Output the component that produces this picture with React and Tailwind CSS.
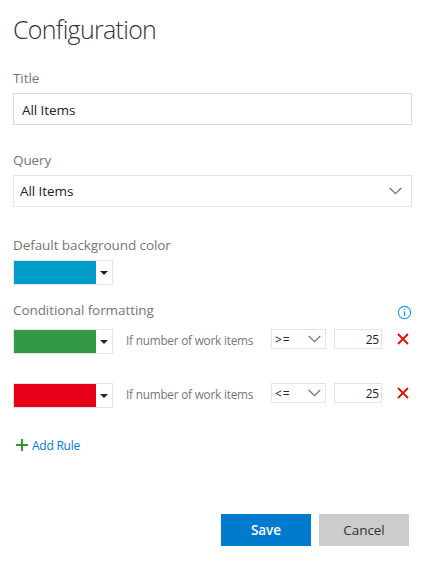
import React from "react";

function Chevron({ className }) {
  return (
    <svg className={className} width="13" height="8" viewBox="0 0 13 8" fill="none" stroke="#767676" strokeWidth="1.3">
      <path d="M0.7 1 L6.5 6.6 L12.3 1" />
    </svg>
  );
}

function ColorPicker({ color }) {
  return (
    <div className="flex h-[25px] w-[100px] shrink-0 border border-[#e3e3e3]">
      <div className={`w-[82px] ${color}`} />
      <div className="flex flex-1 items-center justify-center">
        <svg width="8" height="4" viewBox="0 0 8 4" fill="#222">
          <path d="M0 0 H8 L4 4 Z" />
        </svg>
      </div>
    </div>
  );
}

function Rule({ color, operator, value }) {
  return (
    <div className="flex h-[25px] items-start">
      <ColorPicker color={color} />
      <span className="ml-[13px] w-[145px] whitespace-nowrap text-[11.75px] leading-[23px] tracking-[-0.2px] text-[#767676]">
        If number of work items
      </span>
      <div className="flex h-5 w-[55px] items-center justify-between border border-[#e3e3e3] pr-1 pl-[3px] text-[12px] tracking-[1px] text-[#222]">
        <span className="pt-[2px]">{operator}</span>
        <Chevron />
      </div>
      <div className="ml-2 h-5 w-12 border border-[#e3e3e3] pr-[2px] text-right text-[12px] leading-5 tracking-[-0.2px] text-[#222]">
        {value}
      </div>
      <svg className="mt-1 ml-[15px]" width="12" height="12" viewBox="0 0 12 12" fill="none" stroke="#dd1408" strokeWidth="1.9">
        <path d="M1 1 L11 11 M11 1 L1 11" />
      </svg>
    </div>
  );
}

export default function App() {
  return (
    <div className="h-[567px] w-[436px] bg-white pr-6 pl-[13px] pt-[11px] font-['Open_Sans','Noto_Sans',sans-serif] text-[13.5px] tracking-[-0.08px] text-[#222]">
      <h1 className="h-9 text-[25px] leading-9 font-light tracking-[-0.7px] text-[#333]">Configuration</h1>
      <div className="mt-[21px] h-[25px] leading-5 text-[#767676]">Title</div>
      <div className="h-8 w-[399px] border border-[#dadada] pl-2 leading-[32px]">All Items</div>
      <div className="mt-[25px] h-[25px] leading-5 text-[#767676]">Query</div>
      <div className="flex h-8 w-[399px] items-center justify-between border border-[#e3e3e3] pr-[9px] pl-[6px]">
        <span>All Items</span>
        <Chevron />
      </div>
      <div className="mt-7 h-[25px] leading-5 text-[#767676]">Default background color</div>
      <ColorPicker color="bg-[#009ccc]" />
      <div className="mt-[15px] flex h-[29px] w-[399px] justify-between leading-5 text-[#767676]">
        <span>Conditional formatting</span>
        <svg className="mt-[5px]" width="15" height="15" viewBox="0 0 15 15" fill="none" stroke="#1a9ce0">
          <circle cx="7.5" cy="7.5" r="6.1" strokeWidth="1.1" />
          <path d="M7.5 6.2 V11 M7.5 3.8 V5" strokeWidth="1.2" />
        </svg>
      </div>
      <Rule color="bg-[#339947]" operator=">=" value="25" />
      <div className="h-[29px]" />
      <Rule color="bg-[#e60017]" operator="<=" value="25" />
      <div className="mt-[27px] ml-[3px] flex h-5 items-center gap-1 text-[12px] tracking-[-0.25px] text-[#007acc]">
        <svg width="12" height="12" viewBox="0 0 12 12" fill="none" stroke="#339933" strokeWidth="2">
          <path d="M6 0 V12 M0 6 H12" />
        </svg>
        <span className="pt-[2px]">Add Rule</span>
      </div>
      <div className="mt-[59px] ml-[208px] flex gap-2 text-[13.5px]">
        <button className="h-8 w-[90px] bg-[#007acc] pt-px font-semibold text-white">Save</button>
        <button className="h-8 w-[90px] bg-[#cccccc] pt-px text-[#333]">Cancel</button>
      </div>
    </div>
  );
}
